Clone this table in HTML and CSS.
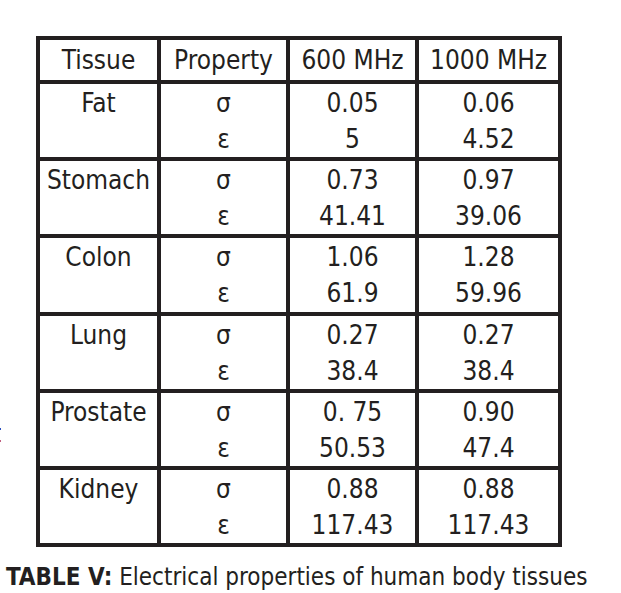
FILE: index.html
```html
<!DOCTYPE html>
<html>
<head>
<meta charset="utf-8">
<link rel="stylesheet" href="styles.css">
</head>
<body>
<div class="page">
  <table class="props">
    <thead>
      <tr>
        <th class="c1">Tissue</th>
        <th class="c2">Property</th>
        <th class="c3">600 MHz</th>
        <th class="c4">1000 MHz</th>
      </tr>
    </thead>
    <tbody>
      <tr><td class="name">Fat</td><td><div>σ</div><div>ε</div></td><td><div>0.05</div><div>5</div></td><td><div>0.06</div><div>4.52</div></td></tr>
      <tr><td class="name">Stomach</td><td><div>σ</div><div>ε</div></td><td><div>0.73</div><div>41.41</div></td><td><div>0.97</div><div>39.06</div></td></tr>
      <tr><td class="name">Colon</td><td><div>σ</div><div>ε</div></td><td><div>1.06</div><div>61.9</div></td><td><div>1.28</div><div>59.96</div></td></tr>
      <tr><td class="name">Lung</td><td><div>σ</div><div>ε</div></td><td><div>0.27</div><div>38.4</div></td><td><div>0.27</div><div>38.4</div></td></tr>
      <tr><td class="name">Prostate</td><td><div>σ</div><div>ε</div></td><td><div>0. 75</div><div>50.53</div></td><td><div>0.90</div><div>47.4</div></td></tr>
      <tr><td class="name">Kidney</td><td><div>σ</div><div>ε</div></td><td><div>0.88</div><div>117.43</div></td><td><div>0.88</div><div>117.43</div></td></tr>
    </tbody>
  </table>
  <p class="caption"><b>TABLE V:</b> Electrical properties of human body tissues</p>
  <span class="edge-mark"></span>
</div>
</body>
</html>
```

FILE: styles.css
```css
html, body {
  margin: 0;
  padding: 0;
  background: #ffffff;
}
.page {
  position: relative;
  width: 621px;
  height: 593px;
  overflow: hidden;
  font-family: "DejaVu Sans Condensed", "DejaVu Sans", sans-serif;
  font-stretch: condensed;
  color: #231f20;
}
.props {
  margin: 36px 0 0 36px;
  border-collapse: separate;
  border-spacing: 0;
  border-top: 4px solid #231f20;
  border-left: 4px solid #231f20;
  table-layout: fixed;
  width: 526px;
  font-size: 26px;
}
.props th, .props td {
  box-sizing: border-box;
  border-right: 4px solid #231f20;
  border-bottom: 4px solid #231f20;
  padding: 0;
  text-align: center;
  font-weight: normal;
}
.props th {
  height: 43px;
  line-height: 40px;
}
.props td {
  vertical-align: top;
  padding-top: 1px;
  line-height: 36.1px;
}
.c1 { width: 121px; }
.c2 { width: 129px; }
.c3 { width: 129px; }
.c4 { width: 143px; }
.caption {
  margin: 16px 0 0 6px;
  font-size: 24px;
  line-height: 28px;
  white-space: nowrap;
}
.caption b {
  font-weight: bold;
}
.edge-mark {
  position: absolute;
  left: 0;
  top: 428px;
  width: 1px;
  height: 14px;
  border-top: 2px solid #2a4fc0;
  border-bottom: 2px solid #c06080;
  box-sizing: border-box;
}
```
